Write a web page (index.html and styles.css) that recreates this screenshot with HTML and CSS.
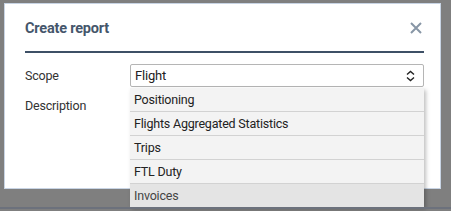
FILE: index.html
```html
<!DOCTYPE html>
<html lang="en">
  <head>
    <meta charset="UTF-8" />
    <title>Create report</title>
    <link rel="stylesheet" href="styles.css">
  </head>
  <body>
    <div class="modal">
      <!-- header -->
      <div class="modal-header">
        <h2>Create report</h2>
        <button class="close-button">
          <svg width="12" height="12" viewBox="0 0 12 12">
            <path d="M1 1 L11 11 M11 1 L1 11" stroke="#8896a6" stroke-width="2" />
          </svg>
        </button>
      </div>

      <!-- form -->
      <div class="form-row">
        <label>Scope</label>
        <div class="select-wrap">
          <div class="select">
            <span>Flight</span>
            <svg width="9" height="12" viewBox="0 0 9 12">
              <path d="M1 4.5 L4.5 1.5 L8 4.5 M1 7.5 L4.5 10.5 L8 7.5" fill="none" stroke="#222" stroke-width="1.4" />
            </svg>
          </div>
          <ul class="options">
            <li>Positioning</li>
            <li>Flights Aggregated Statistics</li>
            <li>Trips</li>
            <li>FTL Duty</li>
            <li class="hover">Invoices</li>
          </ul>
        </div>
      </div>
      <div class="form-row">
        <label>Description</label>
      </div>
    </div>
    <div class="bottom-strip"></div>
  </body>
</html>
```
FILE: styles.css
```css
body {
  margin: 0;
  height: 211px;
  background-color: #7f7f7f;
  font-family: Roboto, "Liberation Sans", sans-serif;
  color: #222;
  overflow: hidden;
}

/* modal */
.modal {
  margin: 3px 0 0 4px;
  width: 437px;
  height: 186px;
  box-sizing: border-box;
  background-color: #fff;
  border: 1px solid #c8d4e4;
  padding: 0 16px 0 20px;
}

.modal-header {
  display: flex;
  align-items: center;
  justify-content: space-between;
  height: 47px;
  border-bottom: 2px solid #3e5066;
  margin-bottom: 11px;
}

.modal-header h2 {
  margin: 0;
  padding-top: 1px;
  font-size: 14.5px;
  letter-spacing: -0.2px;
  font-weight: bold;
  color: #45566b;
}

.close-button {
  background: transparent;
  border: none;
  padding: 0 2px 0 0;
  display: flex;
}

/* form */
.form-row {
  display: flex;
  align-items: flex-start;
  font-size: 12.5px;
  letter-spacing: -0.2px;
}

.form-row label {
  width: 105px;
  line-height: 23px;
  color: #333;
}

.select-wrap {
  position: relative;
  flex: 1;
}

.select {
  height: 23px;
  box-sizing: border-box;
  border: 1px solid #b5b5b5;
  border-radius: 2px;
  display: flex;
  align-items: center;
  justify-content: space-between;
  padding: 0 8px 0 4px;
  font-size: 13px;
  margin-bottom: 7px;
}

.options {
  position: absolute;
  top: 24px;
  left: 0;
  right: 0;
  margin: 0;
  padding: 0;
  list-style: none;
  background-color: #f3f3f3;
  box-shadow: 2px 2px 4px rgba(0, 0, 0, 0.25);
}

.options li {
  height: 23px;
  line-height: 23px;
  padding-left: 4px;
  border-bottom: 1px solid #d2d2d2;
}

.options li.hover {
  background-color: #e4e4e4;
  color: #444;
  border-bottom: none;
}

.bottom-strip {
  position: absolute;
  left: 0;
  right: 0;
  top: 207px;
  height: 2px;
  background-color: #6c717c;
}
```
